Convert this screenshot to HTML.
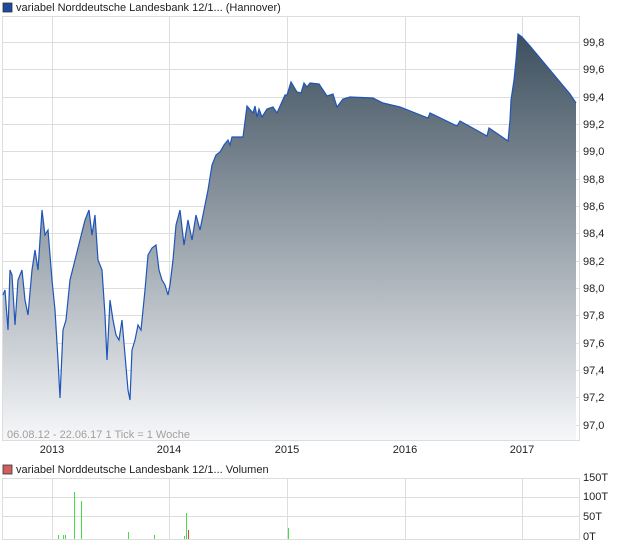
<!DOCTYPE html><html><head><style>body{margin:0;background:#fff;font-family:"Liberation Sans",sans-serif;}svg text{font-family:"Liberation Sans",sans-serif;font-size:11px;fill:#222}</style></head><body>
<svg width="620" height="546" xmlns="http://www.w3.org/2000/svg">
<defs><linearGradient id="g" x1="0" y1="30" x2="0" y2="440" gradientUnits="userSpaceOnUse"><stop offset="0" stop-color="#3b4d5c"/><stop offset="1" stop-color="#f6f7f9"/></linearGradient></defs>
<rect x="3" y="3" width="9" height="9" fill="#1c4aa0" stroke="#333" stroke-width="0.8"/>
<text x="16" y="11">variabel Norddeutsche Landesbank 12/1... (Hannover)</text>
<g stroke="#ddd" stroke-width="1" fill="none">
<rect x="2.5" y="16.5" width="577" height="424"/>
<line x1="52.5" y1="16" x2="52.5" y2="440"/><line x1="169.5" y1="16" x2="169.5" y2="440"/><line x1="287.5" y1="16" x2="287.5" y2="440"/><line x1="405.5" y1="16" x2="405.5" y2="440"/><line x1="522.5" y1="16" x2="522.5" y2="440"/>
<line x1="2" y1="42.5" x2="580" y2="42.5"/><line x1="2" y1="69.5" x2="580" y2="69.5"/><line x1="2" y1="97.5" x2="580" y2="97.5"/><line x1="2" y1="124.5" x2="580" y2="124.5"/><line x1="2" y1="151.5" x2="580" y2="151.5"/><line x1="2" y1="179.5" x2="580" y2="179.5"/><line x1="2" y1="206.5" x2="580" y2="206.5"/><line x1="2" y1="233.5" x2="580" y2="233.5"/><line x1="2" y1="261.5" x2="580" y2="261.5"/><line x1="2" y1="288.5" x2="580" y2="288.5"/><line x1="2" y1="315.5" x2="580" y2="315.5"/><line x1="2" y1="343.5" x2="580" y2="343.5"/><line x1="2" y1="370.5" x2="580" y2="370.5"/><line x1="2" y1="397.5" x2="580" y2="397.5"/><line x1="2" y1="425.5" x2="580" y2="425.5"/>
</g>
<polygon fill="url(#g)" points="3,440 3,295 5,290 8,330 10,270 12,275 15,325 18,280 22,270 25,300 28,315 32,270 35,250 38,270 42,210 45,235 48,230 52,280 55,310 58,360 60,398 63,330 66,320 70,280 75,260 80,240 85,220 89,210 92,235 95,215 98,260 102,270 105,315 107,360 110,300 113,320 116,335 119,340 122,320 125,355 128,390 130,400 132,350 135,340 138,325 141,330 145,290 148,255 152,248 156,245 159,270 162,280 165,285 168,295 170,285 173,260 176,225 180,210 184,245 188,220 192,240 196,215 200,230 204,210 208,190 212,165 216,155 220,152 224,145 228,140 230,145 232,137 243,137 247,106 253,113 255,106 257,117 259,109 262,117 267,109 273,107 277,113 285,95 287,95 291,82 297,92 301,93 304,83 307,87 310,83 319,84 327,96 333,94 337,107 343,99 350,97 373,98 383,103 400,107 428,118 430,113 457,126 460,121 487,136 489,128 508,141 510,120 511,100 514,80 516,60 518,34 522,37 530,46 540,58 550,70 560,82 570,94 576,103 576,440"/>
<polyline fill="none" stroke="#1f55b8" stroke-width="1.2" points="3,295 5,290 8,330 10,270 12,275 15,325 18,280 22,270 25,300 28,315 32,270 35,250 38,270 42,210 45,235 48,230 52,280 55,310 58,360 60,398 63,330 66,320 70,280 75,260 80,240 85,220 89,210 92,235 95,215 98,260 102,270 105,315 107,360 110,300 113,320 116,335 119,340 122,320 125,355 128,390 130,400 132,350 135,340 138,325 141,330 145,290 148,255 152,248 156,245 159,270 162,280 165,285 168,295 170,285 173,260 176,225 180,210 184,245 188,220 192,240 196,215 200,230 204,210 208,190 212,165 216,155 220,152 224,145 228,140 230,145 232,137 243,137 247,106 253,113 255,106 257,117 259,109 262,117 267,109 273,107 277,113 285,95 287,95 291,82 297,92 301,93 304,83 307,87 310,83 319,84 327,96 333,94 337,107 343,99 350,97 373,98 383,103 400,107 428,118 430,113 457,126 460,121 487,136 489,128 508,141 510,120 511,100 514,80 516,60 518,34 522,37 530,46 540,58 550,70 560,82 570,94 576,103"/>
<g text-anchor="start"><text x="583" y="46">99,8</text><text x="583" y="73">99,6</text><text x="583" y="101">99,4</text><text x="583" y="128">99,2</text><text x="583" y="155">99,0</text><text x="583" y="183">98,8</text><text x="583" y="210">98,6</text><text x="583" y="237">98,4</text><text x="583" y="265">98,2</text><text x="583" y="292">98,0</text><text x="583" y="319">97,8</text><text x="583" y="347">97,6</text><text x="583" y="374">97,4</text><text x="583" y="401">97,2</text><text x="583" y="429">97,0</text></g>
<text x="7" y="438" style="fill:#a0a0a0">06.08.12 - 22.06.17   1 Tick = 1 Woche</text>
<g text-anchor="middle"><text x="52" y="453">2013</text><text x="169" y="453">2014</text><text x="287" y="453">2015</text><text x="405" y="453">2016</text><text x="522" y="453">2017</text></g>
<rect x="3" y="465" width="9" height="9" fill="#d06060" stroke="#333" stroke-width="0.8"/>
<text x="16" y="473">variabel Norddeutsche Landesbank 12/1... Volumen</text>
<g stroke="#ddd" fill="none">
<rect x="2.5" y="478.5" width="577" height="61"/>
<line x1="2" y1="497.5" x2="580" y2="497.5"/><line x1="2" y1="516.5" x2="580" y2="516.5"/>
<line x1="52.5" y1="478" x2="52.5" y2="539"/><line x1="169.5" y1="478" x2="169.5" y2="539"/><line x1="287.5" y1="478" x2="287.5" y2="539"/><line x1="405.5" y1="478" x2="405.5" y2="539"/><line x1="522.5" y1="478" x2="522.5" y2="539"/>
</g>
<g stroke="#44dd44" stroke-width="1">
<line x1="58.5" y1="539" x2="58.5" y2="535"/><line x1="63.5" y1="539" x2="63.5" y2="535"/><line x1="65.5" y1="539" x2="65.5" y2="535"/><line x1="74.5" y1="539" x2="74.5" y2="492"/><line x1="81.5" y1="539" x2="81.5" y2="501"/><line x1="128.5" y1="539" x2="128.5" y2="532"/><line x1="154.5" y1="539" x2="154.5" y2="535"/><line x1="184.5" y1="539" x2="184.5" y2="536"/><line x1="186.5" y1="539" x2="186.5" y2="513"/><line x1="288.5" y1="539" x2="288.5" y2="528"/>
</g>
<line x1="188.5" y1="539" x2="188.5" y2="530" stroke="#dd4444"/>
<text x="583" y="481">150T</text><text x="583" y="500">100T</text><text x="583" y="520">50T</text><text x="583" y="540">0T</text>
</svg></body></html>
